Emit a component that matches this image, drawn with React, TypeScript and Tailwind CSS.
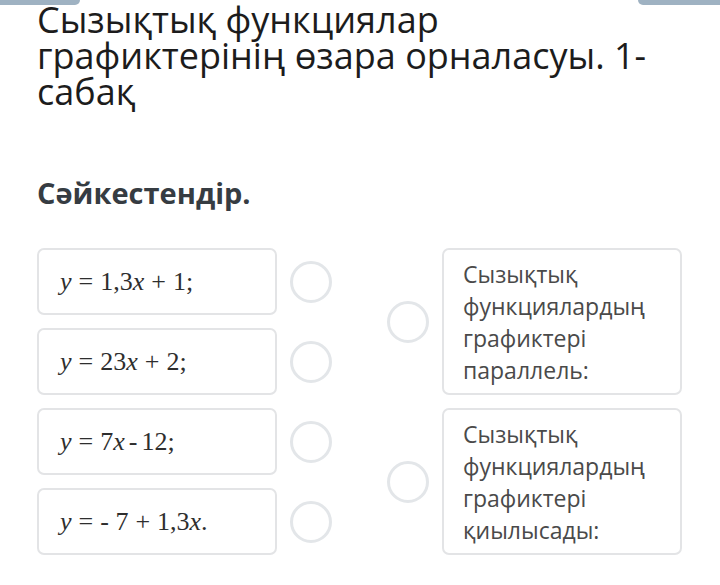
import React from 'react';

const left = [
  { id: 1, parts: ['1,3', 'x', '+', '1;'] },
  { id: 2, parts: ['23', 'x', '+', '2;'] },
  { id: 3, parts: ['7', 'x', '-', '12;'] },
  { id: 4, parts: ['- 7', '', '+', '1,3x.'] },
];

const right = [
  ['Сызықтық', 'функциялардың', 'графиктері', 'параллель:'],
  ['Сызықтық', 'функциялардың', 'графиктері', 'қиылысады:'],
];

const Circle: React.FC = () => (
  <div className="w-[42px] h-[42px] rounded-full border-[3px] border-[#e3e6e9] bg-white shrink-0" />
);

const Formula: React.FC<{ parts: string[] }> = ({ parts }) => {
  const [a, v, op, b] = parts;
  const tail = b.endsWith('x.') ? (
    <>
      {b.slice(0, -2)}
      <i>x</i>.
    </>
  ) : (
    b
  );
  return (
    <span className="text-[26px] text-[#2e2e2e] whitespace-pre" style={{ fontFamily: '"Liberation Serif", "DejaVu Serif", serif' }}>
      <i>y</i>
      <span className="mx-[7px]">=</span>
      {a}
      {v && <i>{v}</i>}
      <span className={op === '+' ? 'mx-[7px]' : 'mx-[4px]'}>{op}</span>
      {tail}
    </span>
  );
};

const App: React.FC = () => {
  return (
    <div className="relative w-[720px] h-[585px] bg-white overflow-hidden" style={{ fontFamily: '"Open Sans", sans-serif' }}>
      <div className="absolute left-0 top-0 w-[80px] h-[5px] bg-[#9fb2c2] rounded-br-[6px]" />
      <div className="absolute right-0 top-0 w-[82px] h-[5px] bg-[#9fb2c2] rounded-bl-[6px]" />

      <div className="pl-[37px] pr-[30px] pt-[2px]">
        <h1 className="text-[36px] leading-[36px] text-[#1c1c1c] font-normal">
          Сызықтық функциялар
          <br />
          графиктерінің өзара орналасуы. 1-
          <br />
          сабақ
        </h1>
        <h2 className="mt-[67px] text-[29px] leading-[32px] font-bold text-[#363c42]">Сәйкестендір.</h2>

        <div className="mt-[39px] flex">
          <div className="flex flex-col gap-[13px]">
            {left.map((row) => (
              <div key={row.id} className="flex items-center">
                <div className="w-[240px] h-[67px] border-2 border-[#e3e4e6] rounded-[7px] flex items-center pl-[21px]">
                  <Formula parts={row.parts} />
                </div>
                <div className="ml-[13px]">
                  <Circle />
                </div>
              </div>
            ))}
          </div>

          <div className="ml-[55px] flex flex-col gap-[13px]">
            {right.map((lines, i) => (
              <div key={i} className="flex items-center">
                <Circle />
                <div className="ml-[13px] w-[240px] h-[147px] border-2 border-[#e3e4e6] rounded-[7px] pl-[19px] pt-[8px] text-[23px] leading-[32px] text-[#4a4a4a]">
                  {lines.map((l) => (
                    <div key={l}>{l}</div>
                  ))}
                </div>
              </div>
            ))}
          </div>
        </div>
      </div>
    </div>
  );
};

export default App;
